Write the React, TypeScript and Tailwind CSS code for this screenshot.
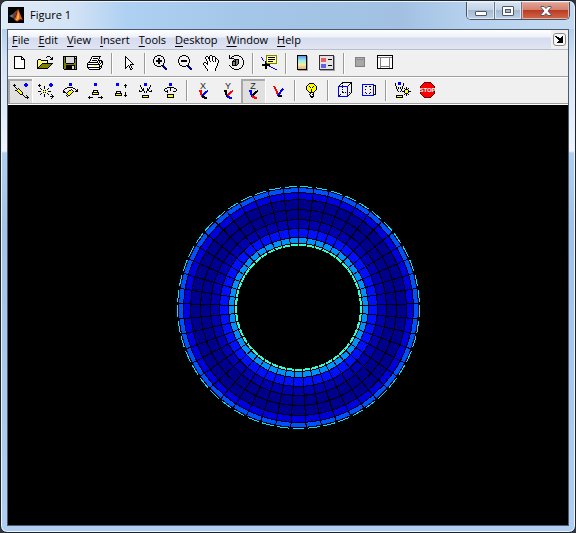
import React from "react";

const COLORS: Record<string, string> = {
  K: "#000000",
  W: "#ffffff",
  Y: "#ffff00",
  L: "#ffffa0",
  O: "#808000",
  G: "#d8d8d8",
  B: "#0000ff",
  R: "#ff0000",
  N: "#000080",
  D: "#808080",
};

/* Draws a small bitmap icon; every run of one colour is a single rect. */
function Bitmap({ rows, x = 4, y = 4 }: { rows: string[]; x?: number; y?: number }) {
  const cells: React.ReactNode[] = [];
  rows.forEach((row, r) => {
    let c = 0;
    while (c < row.length) {
      const ch = row[c];
      let end = c + 1;
      while (end < row.length && row[end] === ch) end++;
      if (COLORS[ch]) {
        cells.push(
          <rect key={`${r}-${c}`} x={x + c} y={y + r} width={end - c} height={1} fill={COLORS[ch]} />
        );
      }
      c = end;
    }
  });
  return <g>{cells}</g>;
}

const PAGE = [
  "KKKKKKKK...",
  "KWWWWWWKK..",
  "KWWWWWWKWK.",
  "KWWWWWWKKKK",
  "KWWWWWWWWWK",
  "KWWWWWWWWWK",
  "KWWWWWWWWWK",
  "KWWWWWWWWWK",
  "KWWWWWWWWWK",
  "KWWWWWWWWWK",
  "KWWWWWWWWWK",
  "KWWWWWWWWWK",
  "KKKKKKKKKKK",
];
const FOLDER = [
  "..........KKK...",
  ".........K...K.K",
  "..............KK",
  ".KKK.........KKK",
  "KYWYKKKKKKK.....",
  "KWYWYWYWYWK.....",
  "KYWYWYWYWYK.....",
  "KWYWYKKKKKKKKKKK",
  "KYWYKOOOOOOOOOK.",
  "KWYKOOOOOOOOOK..",
  "KYKOOOOOOOOOK...",
  "KKOOOOOOOOOK....",
  "KKKKKKKKKKK.....",
];
const DISK = [
  "KKKKKKKKKKKKKK",
  "KOKGGGGGGGGKGK",
  "KOKGGGGGGGGKKK",
  "KOKGGGGGGGGKOK",
  "KOKGGGGGGGGKOK",
  "KOKGGGGGGGGKOK",
  "KOKGGGGGGGGKOK",
  "KOOKKKKKKKKOOK",
  "KOOOOOOOOOOOOK",
  "KOOKKKKKKKKKOK",
  "KOOKKKKKKGGKOK",
  "KOOKKKKKKGGKOK",
  "KOOKKKKKKGGKOK",
  ".KKKKKKKKKKKKK",
];
const PRINTER = [
  ".....KKKKKKKKK..",
  "....KWWWWWWWK...",
  "....KWKKKKKWK...",
  "...KWWWWWWWK....",
  "...KWKKKKKWKKKK.",
  "..KWWWWWWWKWKWKK",
  ".KKKKKKKKKKWKWKK",
  "KWWWWWWWWWWKWKWK",
  "KKKKKKKKKKKKKWWK",
  "KWWWWWWYYYWWKWK.",
  "KWWWWWWWWWWWKKK.",
  "KKKKKKKKKKKKKWK.",
  ".KWWWWWWWWWWKK..",
  "..KKKKKKKKKKK...",
];
const POINTER = [
  "K........",
  "KK.......",
  "KWK......",
  "KWWK.....",
  "KWWWK....",
  "KWWWWK...",
  "KWWWWWK..",
  "KWWWWWWK.",
  "KWWWWKKKK",
  "KWWKWK...",
  "KWK.KWK..",
  "KK..KWK..",
  "K....KWK.",
  ".....KK..",
];
const LENS_IN = [
  "....KKKK.......",
  "..KK....KK.....",
  ".K........K....",
  ".K...KK...K....",
  "K....KK....K...",
  "K..KKKKKK..K...",
  "K..KKKKKK..K...",
  "K....KK....K...",
  ".K...KK...K....",
  ".K........K....",
  "..KK....KKN....",
  "....KKKK.NNN...",
  "..........NNN..",
  "...........NNN.",
  "............NN.",
];
const LENS_OUT = [
  "....KKKK.......",
  "..KK....KK.....",
  ".K........K....",
  ".K........K....",
  "K..........K...",
  "K..KKKKKK..K...",
  "K..KKKKKK..K...",
  "K..........K...",
  ".K........K....",
  ".K........K....",
  "..KK....KKN....",
  "....KKKK.NNN...",
  "..........NNN..",
  "...........NNN.",
  "............NN.",
];
const HAND = [
  ".......KK.......",
  "...KK.KWWKKK....",
  "..KWWKKWWKWWK...",
  "..KWWKKWWKWWKK..",
  "...KWWKWWKWWKWK.",
  "...KWWKWWKWWKWWK",
  "....KWWKWWKWKWWK",
  ".KK.KWWWWWWWWWWK",
  "KWWKKWWWWWWWWWK.",
  "KWWWKWWWWWWWWWK.",
  ".KWWWWWWWWWWWWK.",
  "..KWWWWWWWWWWK..",
  "..KWWWWWWWWWWK..",
  "...KWWWWWWWWK...",
  "....KWWWWWWWK...",
  "....KWWWWWWWK...",
];
const ROTATE = [
  "K....KKKKK.....",
  "K..KK.....KK...",
  "K.K.........K..",
  "KKKKK........K.",
  ".....KKKKK...K.",
  "....KDKDDK....K",
  "...KKKKDDK....K",
  "...KDDKDDK....K",
  "...KDDKDDK....K",
  "...KDDKDK.....K",
  "K..KKKKK.....K.",
  ".K...........K.",
  "..K.........K..",
  "...KK.....KK...",
  ".....KKKKK.....",
];
const DATATIP = [
  ".....OOOOOOOOOOO",
  ".....OLLLLLLLLLO",
  "B....OLKKKKKKKLO",
  ".B...OLLLLLLLLLO",
  ".B...OLKKKKKKKLO",
  "..B..OLLLLLLLLLO",
  "....KOLKKKKKLLLO",
  "....KOLLLLLLLLLO",
  "....KKOOOOOOOOOO",
  ".KKKKKKKK.......",
  ".KKKKKKKK.......",
  "....KK..BB......",
  "....KK....BB....",
  "....KK......BB..",
  "..............BB",
];
const ORBIT = [
  "............BB..",
  ".K.........BBBB.",
  "KKK........BBBB.",
  ".K..........BB..",
  "..K.............",
  "...K.K..........",
  "....KYK.........",
  "..KKYYYK........",
  "....KYYYK.......",
  ".....KYYYK......",
  "......KYYK......",
  ".......KKK......",
  "..........K..K..",
  "...........K..K.",
  "............KKKK",
  "..............K.",
];
const LIGHT = [
  "............BB..",
  ".K.........BBBB.",
  "KKK........BBBB.",
  ".K....K.....BB..",
  "......K.........",
  "..K...K...K.....",
  "...K.....K......",
  ".....KYK........",
  "KKK..YWY..KKK...",
  ".....KYK........",
  "...K.....K......",
  "..K...K...K..K..",
  "......K.......K.",
  "......K.....KKKK",
  "..............K.",
  ".............K..",
];
const PAN = [
  "......BBB.......",
  "......BBB.......",
  "......BBB.......",
  "................",
  "....KKKKKK......",
  "..KK......KK....",
  ".K......K...K.K.",
  "K.....KKYK...KK.",
  "KK...KYYYYK.KKK.",
  "KKK.KYYYYK......",
  "...KYYYYK.......",
  "....KYYK........",
  "...K.KK.........",
  "....K...........",
];
const HORIZ = [
  "......BBB.......",
  "......BBB.......",
  "......BBB.......",
  "................",
  "................",
  "................",
  "................",
  ".....KKKKK......",
  ".....K...K......",
  "....KKKKKKK.....",
  "....KYYYYYK.....",
  "....KKKKKKK.....",
  "................",
  ".K...........K..",
  "KKKKK.....KKKKK.",
  ".K...........K..",
];
const VERT = [
  "..BBB...........",
  "..BBB......K....",
  "..BBB.....KKK...",
  "...........K....",
  "...........K....",
  "................",
  "................",
  "................",
  "..KKKKK.........",
  "..K...K....K....",
  ".KKKKKKK...K....",
  ".KYYYYYK...K....",
  ".KKKKKKK..KKK...",
  "...........K....",
];
const ZOOMCAM = [
  "......BBB.......",
  "......BBB.......",
  "..K...BBB...K...",
  "..K.........K...",
  "...K.......K....",
  "...K.K...K.K....",
  "....KK...KK.....",
  ".K..KK...KK..K..",
  ".KKK..K.K..KKK..",
  "......K.K.......",
  "................",
  "................",
  "....KKKKKKK.....",
  "....KYYYYYK.....",
  "....KKKKKKK.....",
];
const ROLLCAM = [
  "......BBB.......",
  "......BBB.......",
  "......BBB.......",
  "................",
  "....KKKKKKK.....",
  "..KK...K...KK...",
  ".K.....K.....K..",
  ".K..K..K.....K..",
  "..KKK.....KKK...",
  "....K...........",
  "................",
  "....KKKKKKK.....",
  "....KYYYYYK.....",
  "....KYYYYYK.....",
  "....KKKKKKK.....",
];
const BULB = [
  "...KKKKK...",
  "..KYYYYYK..",
  ".KYYYYYYYK.",
  "KYYKYYYKYYK",
  "KYYYKYKYYYK",
  "KYYYYYYYYYK",
  "KYYYYKYYYYK",
  ".KYYYKYYYK.",
  "..KYYKYYK..",
  "...KKKKK...",
  "....KWWK...",
  "...KWWKK...",
  "....KWWK...",
  "....KKKK...",
  ".....KK....",
];
const SCENE = [
  "...BBB..........",
  "K..BBB..K.......",
  "K..BBB..K.......",
  "K.......K.......",
  ".K.....K........",
  ".K.K.K.K...K....",
  ".K.K.K.K.K.K.K..",
  "..K...K...KKK...",
  "..K...K..KYYYK..",
  "...K.K.KKKYWYKKK",
  ".........KYYYK..",
  "..........KKK...",
  ".........K.K.K..",
  ".KKKKKKK...K....",
  ".KYYYYYK........",
  ".KKKKKKK........",
];
const DOCK = [
  "KK.....K.",
  ".KKK..KK.",
  "..KKKKKK.",
  "...KKKKK.",
  "....KKKK.",
  "...KKKKK.",
  "..KKKKKK.",
];

function Tool({
  label,
  pressed = false,
  children,
}: {
  label: string;
  pressed?: boolean;
  children: React.ReactNode;
}) {
  return (
    <button
      type="button"
      aria-label={label}
      aria-pressed={pressed}
      className={
        pressed
          ? "w-[25px] h-6 shrink-0 bg-[#e0e0e0] shadow-[inset_1px_1px_0_1px_#a8a8a8] border-r border-white"
          : "w-[25px] h-6 shrink-0"
      }
    >
      <svg width="24" height="24" viewBox="0 0 24 24" shapeRendering="crispEdges" className="block">
        {children}
      </svg>
    </button>
  );
}

function Separator() {
  return (
    <span className="w-2 h-[21px] shrink-0 flex justify-center">
      <span className="w-px bg-[#9a9a9a] border-r border-white box-content" />
    </span>
  );
}

function Axes({ letter, a, b, c }: { letter?: string; a: string; b: string; c: string }) {
  return (
    <g fill="none" strokeWidth="2">
      {letter ? (
        <>
          <path d="M8 12h2v3l2 3" stroke={a} />
          <path d="M17 12l-2 1l-4 4" stroke={b} />
          <path d="M11 17l3 2h2" stroke={c} />
          <text x="12" y="10" fontSize="9" textAnchor="middle" fill="#222222" className="font-['Liberation_Sans',sans-serif]">
            {letter}
          </text>
        </>
      ) : (
        <>
          <path d="M8 7l2 4l2 5" stroke={a} />
          <path d="M17 10l-2 2l-3 5" stroke={b} />
          <path d="M12 17h3l1 1" stroke={c} />
        </>
      )}
    </g>
  );
}

const SPOKES = 49;
const BANDS: [number, number, string][] = [
  [120, 115, "#0050ff"],
  [115, 108, "#0000df"],
  [108, 98, "#00008f"],
  [98, 88, "#00008f"],
  [88, 79, "#0000af"],
  [79, 70, "#0010ff"],
  [70, 64, "#008fff"],
  [64, 61, "#30ffcf"],
];

/* Torus surface seen from above: quads of each band with black mesh edges. */
function Torus() {
  const cx = 290.5;
  const cy = 202.5;
  const at = (r: number, i: number) => {
    const t = (2 * Math.PI * i) / SPOKES - Math.PI / 2;
    return `${(cx + r * Math.cos(t)).toFixed(2)},${(cy + r * Math.sin(t)).toFixed(2)}`;
  };
  const quads: React.ReactNode[] = [];
  BANDS.forEach(([outer, inner, fill], b) => {
    for (let i = 0; i < SPOKES; i++) {
      quads.push(
        <polygon
          key={`${b}-${i}`}
          points={[at(outer, i), at(outer, i + 1), at(inner, i + 1), at(inner, i)].join(" ")}
          fill={fill}
          stroke="#000000"
        />
      );
    }
  });
  for (let i = 0; i < SPOKES; i++) {
    quads.push(
      <polyline key={`rim-${i}`} points={`${at(121, i + 0.12)} ${at(121, i + 0.88)}`} fill="none" stroke="#00dfff" />
    );
  }
  return <g>{quads}</g>;
}

const MENUS = ["File", "Edit", "View", "Insert", "Tools", "Desktop", "Window", "Help"];

export default function App() {
  return (
    <div className="min-h-screen bg-[#30343c] flex font-['Open_Sans','Noto_Sans',sans-serif] text-[11px] text-black">
      <div className="flex-1 flex flex-col rounded-[7px] border border-[#20242c] bg-[linear-gradient(#b4d0ee_0,#b4d0ee_28px,#d3e3f5_60px,#eef4fb_150px,#b0cff0_152px,#a3c3e6_230px,#b0cef0_100%)] shadow-[inset_0_0_0_1px_#eaf4fd] px-[6px] pb-[6px]">
        <header className="h-7 -mx-[5px] pl-[6px] flex items-start rounded-t-[6px] border-t border-[#eaf4fd] bg-[linear-gradient(90deg,#dfeaf7_0,#d3e3f5_70px,#aed0f2_125px,#a4c6e8_240px,#a2c1e2_400px,#b7d2ef_470px,#c4daf1_100%)]">
          <svg width="16" height="16" viewBox="0 0 16 16" className="mt-[5px] shrink-0" aria-hidden="true">
            <rect width="16" height="16" fill="#000000" />
            <path d="M1 9l4-2 3-3-1 6-2 1z" fill="#3b7f9c" />
            <path d="M5 7l3-3 2-2-2 6-2 4-1-1z" fill="#7a3a2a" />
            <path d="M10 2c1 1 2 6 5 11-2-1-3-1-5 1-1 1-2 0-4-2 2-1 3-6 4-10z" fill="#e8601c" />
            <path d="M10 3c0 4-1 8-2 10 2 0 3-1 3-3 0-3-1-5-1-7z" fill="#ffc04a" />
          </svg>
          <h1 className="ml-[6px] mt-[5px] leading-4 flex-1">Figure 1</h1>
          <div className="flex h-[18px] mr-1 rounded-b-[5px] overflow-hidden border border-t-0 border-[#4a5260]">
            <button type="button" aria-label="Minimize" className="w-7 flex justify-center pt-[9px] border-r border-[#6b7585] bg-[linear-gradient(#d5e2f0_0,#c3d4e7_48%,#a4bad2_50%,#bdd2e8_100%)] shadow-[inset_0_0_0_1px_#dfeaf5]">
              <span className="w-3 h-[5px] rounded-[1px] bg-white border border-[#535666]" />
            </button>
            <button type="button" aria-label="Maximize" className="w-[27px] flex justify-center pt-1 border-r border-[#6b7585] bg-[linear-gradient(#d5e2f0_0,#c3d4e7_48%,#a4bad2_50%,#bdd2e8_100%)] shadow-[inset_0_0_0_1px_#dfeaf5]">
              <span className="w-3 h-[10px] rounded-[1px] bg-white border border-[#535666] flex items-center justify-center">
                <span className="w-[6px] h-1 border border-[#535666] bg-[#a4bad2]" />
              </span>
            </button>
            <button type="button" aria-label="Close" className="w-[47px] flex justify-center pt-1 bg-[linear-gradient(#e0a598_0,#d3806f_46%,#bd3a22_50%,#cf6a4c_100%)] shadow-[inset_0_0_0_1px_#e8b0a0]">
              <svg width="12" height="10" viewBox="0 0 12 10" aria-hidden="true">
                <path d="M1 .5h3l2 2 2-2h3v1L8 5l3 3.500v1H8l-2-2-2 2H1v-1L4 5 1 1.500z" fill="#ffffff" stroke="#535666" />
              </svg>
            </button>
          </div>
        </header>

        <main className="flex-1 flex flex-col border border-[#4c5a6c] bg-[#f0f0f0]">
          <nav className="h-5 flex items-stretch bg-[linear-gradient(#ffffff_0,#eef1f8_7px,#d6dcee_8px,#e0e4f3_100%)] border-b border-[#b9bdd0]">
            <div className="flex-1 flex items-center gap-[9px] pl-1">
              {MENUS.map((m) => (
                <button key={m} type="button" className="leading-[18px]">
                  <u className="underline-offset-2">{m[0]}</u>
                  {m.slice(1)}
                </button>
              ))}
            </div>
            <div className="w-[17px] bg-[#f0f0f0] flex items-center justify-center">
              <button type="button" aria-label="Dock figure" className="w-[13px] h-[13px] rounded-[3px] border border-[#8a8a8a] bg-[#f8f8f8] flex items-center justify-center">
                <svg width="9" height="7" viewBox="0 0 9 7" shapeRendering="crispEdges" aria-hidden="true">
                  <Bitmap rows={DOCK} x={0} y={0} />
                </svg>
              </button>
            </div>
          </nav>

          <div role="toolbar" aria-label="Figure toolbar" className="h-[27px] flex items-center border-b border-[#a0a0a0]">
            <Tool label="New figure"><Bitmap rows={PAGE} x={6} y={5} /></Tool>
            <Tool label="Open file"><Bitmap rows={FOLDER} x={4} y={5} /></Tool>
            <Tool label="Save figure"><Bitmap rows={DISK} x={5} y={5} /></Tool>
            <Tool label="Print figure"><Bitmap rows={PRINTER} x={4} y={5} /></Tool>
            <Separator />
            <Tool label="Edit plot"><Bitmap rows={POINTER} x={9} y={5} /></Tool>
            <Separator />
            <Tool label="Zoom in"><Bitmap rows={LENS_IN} x={4} y={4} /></Tool>
            <Tool label="Zoom out"><Bitmap rows={LENS_OUT} x={4} y={4} /></Tool>
            <Tool label="Pan"><Bitmap rows={HAND} x={4} y={4} /></Tool>
            <Tool label="Rotate 3D"><Bitmap rows={ROTATE} x={5} y={4} /></Tool>
            <Separator />
            <Tool label="Data cursor"><Bitmap rows={DATATIP} x={4} y={4} /></Tool>
            <Separator />
            <Tool label="Insert colorbar">
              <defs>
                <linearGradient id="bar" x1="0" y1="0" x2="0" y2="1">
                  <stop offset="0" stopColor="#5f86e8" />
                  <stop offset="0.35" stopColor="#90eef0" />
                  <stop offset="0.65" stopColor="#f2f29c" />
                  <stop offset="1" stopColor="#f0a080" />
                </linearGradient>
              </defs>
              <rect x="8" y="5" width="10" height="15" fill="#a0a0a0" />
              <rect x="7.500" y="4.500" width="9" height="14" fill="url(#bar)" stroke="#000000" />
            </Tool>
            <Tool label="Insert legend">
              <rect x="5" y="5" width="15" height="15" fill="#a0a0a0" />
              <rect x="4.500" y="4.500" width="14" height="14" fill="#e4e4e4" stroke="#303030" />
              <rect x="6" y="7" width="5" height="4" fill="#e86060" />
              <rect x="6" y="13" width="5" height="4" fill="#6060e8" />
              <path d="M13 8.500h4M13 14.500h4" stroke="#000000" />
            </Tool>
            <Separator />
            <Tool label="Hide plot tools">
              <rect x="7.500" y="6.500" width="9" height="9" fill="#a8a8a8" stroke="#808080" />
              <path d="M8 8.500h8" stroke="#909090" />
            </Tool>
            <Tool label="Show plot tools">
              <rect x="4.500" y="4.500" width="15" height="13" fill="#ffffff" stroke="#000000" />
              <path d="M5 6.500h14M7.500 7v10M16.500 7v10M8 15.500h8" stroke="#808080" />
            </Tool>
          </div>

          <div role="toolbar" aria-label="Camera toolbar" className="h-7 flex items-center border-b border-white shadow-[inset_0_1px_0_#ffffff,inset_0_-1px_0_#a0a0a0]">
            <Tool label="Orbit camera" pressed><Bitmap rows={ORBIT} x={5} y={4} /></Tool>
            <Tool label="Orbit scene light"><Bitmap rows={LIGHT} x={5} y={4} /></Tool>
            <Tool label="Pan and tilt camera"><Bitmap rows={PAN} x={5} y={4} /></Tool>
            <Tool label="Move camera horizontally"><Bitmap rows={HORIZ} x={5} y={4} /></Tool>
            <Tool label="Move camera forward"><Bitmap rows={VERT} x={6} y={4} /></Tool>
            <Tool label="Zoom camera"><Bitmap rows={ZOOMCAM} x={5} y={4} /></Tool>
            <Tool label="Roll camera"><Bitmap rows={ROLLCAM} x={5} y={4} /></Tool>
            <Separator />
            <Tool label="Principal axis X"><Axes letter="X" a="#ff0000" b="#0000ff" c="#000000" /></Tool>
            <Tool label="Principal axis Y"><Axes letter="Y" a="#000000" b="#ff0000" c="#0000ff" /></Tool>
            <Tool label="Principal axis Z" pressed><Axes letter="Z" a="#0000ff" b="#000000" c="#ff0000" /></Tool>
            <Tool label="No principal axis"><Axes a="#ff0000" b="#0000ff" c="#000000" /></Tool>
            <Separator />
            <Tool label="Toggle scene light"><Bitmap rows={BULB} x={7} y={4} /></Tool>
            <Separator />
            <Tool label="Orthographic projection">
              <path d="M6.500 7.500l4-4h9v10l-4 4M15.500 7.500l4-4" fill="none" stroke="#000000" />
              <path d="M10.500 4v9.500h9M10.500 13.500l-4 4" fill="none" stroke="#000000" strokeDasharray="1 1" />
              <rect x="6.500" y="7.500" width="9" height="10" fill="none" stroke="#0000ff" />
            </Tool>
            <Tool label="Perspective projection">
              <path d="M16 5.500l2 1v9l-2 1" fill="none" stroke="#000000" />
              <path d="M8.500 7v8M13.500 7v8M9 7.500h5M9 14.500h5" fill="none" stroke="#000000" strokeDasharray="1 2" />
              <rect x="5.500" y="5.500" width="11" height="11" fill="none" stroke="#0000ff" />
            </Tool>
            <Separator />
            <Tool label="Reset camera and scene light"><Bitmap rows={SCENE} x={5} y={3} /></Tool>
            <Tool label="Stop camera motion">
              <path d="M9.500 3.500h6l4 4v7l-4 4h-6l-4-4v-7z" fill="#ff0000" stroke="#600000" />
              <text x="12.500" y="13" fontSize="6" fontWeight="700" textAnchor="middle" fill="#ffffff" className="font-['Liberation_Sans_Narrow','Liberation_Sans',sans-serif]">
                STOP
              </text>
            </Tool>
          </div>

          <div className="flex-1 bg-black flex">
            <svg viewBox="0 0 560 420" className="w-full" shapeRendering="crispEdges" role="img" aria-label="Surface plot of a torus seen from above">
              <Torus />
            </svg>
          </div>
        </main>
      </div>
    </div>
  );
}
